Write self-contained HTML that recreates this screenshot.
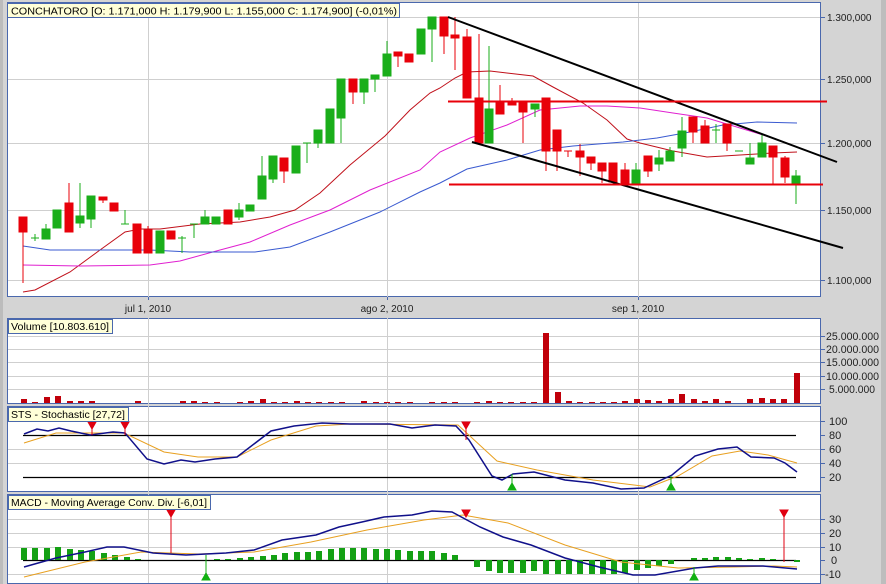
<!DOCTYPE html>
<html><head><meta charset="utf-8"><style>
html,body{margin:0;padding:0;background:#d4d4d4;width:886px;height:584px;overflow:hidden}
svg{display:block;font-family:"Liberation Sans",sans-serif}
</style></head><body>
<svg width="886" height="584" viewBox="0 0 886 584" xmlns="http://www.w3.org/2000/svg">
<rect x="0" y="0" width="886" height="584" fill="#d4d4d4"/>
<rect x="881" y="0" width="5" height="584" fill="#bdbdbd"/>
<rect x="0" y="0" width="3" height="584" fill="#bcbcbc"/>
<g fill="#fff" stroke="#4a68ad" stroke-width="1">
<rect x="7.5" y="2.5" width="813" height="294"/>
<rect x="7.5" y="318.5" width="813" height="85"/>
<rect x="7.5" y="406.5" width="813" height="85"/>
<rect x="7.5" y="494.5" width="813" height="89"/>
</g>
<g stroke="#cfcfcf" stroke-width="1">
<line x1="8" y1="17.5" x2="820" y2="17.5"/><line x1="8" y1="79.5" x2="820" y2="79.5"/><line x1="8" y1="143.5" x2="820" y2="143.5"/><line x1="8" y1="210.5" x2="820" y2="210.5"/><line x1="8" y1="280.5" x2="820" y2="280.5"/>
<line x1="148.5" y1="3" x2="148.5" y2="583"/><line x1="387.5" y1="3" x2="387.5" y2="583"/><line x1="638.5" y1="3" x2="638.5" y2="583"/>
<line x1="8" y1="336.5" x2="820" y2="336.5"/><line x1="8" y1="349.5" x2="820" y2="349.5"/><line x1="8" y1="362.5" x2="820" y2="362.5"/><line x1="8" y1="376.5" x2="820" y2="376.5"/><line x1="8" y1="389.5" x2="820" y2="389.5"/>
<line x1="8" y1="421.5" x2="820" y2="421.5"/><line x1="8" y1="449.5" x2="820" y2="449.5"/><line x1="8" y1="463.5" x2="820" y2="463.5"/>
<line x1="8" y1="519.5" x2="820" y2="519.5"/><line x1="8" y1="533.5" x2="820" y2="533.5"/><line x1="8" y1="547.5" x2="820" y2="547.5"/><line x1="8" y1="574.5" x2="820" y2="574.5"/>
</g>
<rect x="8" y="297" width="812" height="21" fill="#d4d4d4"/>
<rect x="8" y="404" width="812" height="2" fill="#d4d4d4"/>
<rect x="8" y="492" width="812" height="2" fill="#d4d4d4"/>
<g stroke="#4a68ad"><line x1="821" y1="17.5" x2="825" y2="17.5"/><line x1="821" y1="79.5" x2="825" y2="79.5"/><line x1="821" y1="143.5" x2="825" y2="143.5"/><line x1="821" y1="210.5" x2="825" y2="210.5"/><line x1="821" y1="280.5" x2="825" y2="280.5"/>
<line x1="821" y1="336.5" x2="825" y2="336.5"/><line x1="821" y1="349.5" x2="825" y2="349.5"/><line x1="821" y1="362.5" x2="825" y2="362.5"/><line x1="821" y1="376.5" x2="825" y2="376.5"/><line x1="821" y1="389.5" x2="825" y2="389.5"/>
<line x1="821" y1="421.5" x2="825" y2="421.5"/><line x1="821" y1="435.5" x2="825" y2="435.5"/><line x1="821" y1="449.5" x2="825" y2="449.5"/><line x1="821" y1="463.5" x2="825" y2="463.5"/><line x1="821" y1="477.5" x2="825" y2="477.5"/>
<line x1="821" y1="519.5" x2="825" y2="519.5"/><line x1="821" y1="533.5" x2="825" y2="533.5"/><line x1="821" y1="547.5" x2="825" y2="547.5"/><line x1="821" y1="560.5" x2="825" y2="560.5"/><line x1="821" y1="574.5" x2="825" y2="574.5"/>
<line x1="148.5" y1="297" x2="148.5" y2="300"/><line x1="387.5" y1="297" x2="387.5" y2="300"/><line x1="638.5" y1="297" x2="638.5" y2="300"/></g>
<g font-size="10" fill="#222">
<text x="827" y="21">1.300,000</text><text x="827" y="83">1.250,000</text><text x="827" y="147">1.200,000</text><text x="827" y="214">1.150,000</text><text x="827" y="284">1.100,000</text>
<text x="148" y="312" text-anchor="middle">jul 1, 2010</text><text x="387" y="312" text-anchor="middle">ago 2, 2010</text><text x="638" y="312" text-anchor="middle">sep 1, 2010</text>
</g>
<g font-size="11" fill="#222">
<text x="826" y="340" textLength="53" lengthAdjust="spacingAndGlyphs">25.000.000</text><text x="826" y="353" textLength="53" lengthAdjust="spacingAndGlyphs">20.000.000</text><text x="826" y="366" textLength="53" lengthAdjust="spacingAndGlyphs">15.000.000</text><text x="826" y="380" textLength="53" lengthAdjust="spacingAndGlyphs">10.000.000</text><text x="829" y="393" textLength="46" lengthAdjust="spacingAndGlyphs">5.000.000</text>
<text x="829" y="425">100</text><text x="829" y="439">80</text><text x="829" y="453">60</text><text x="829" y="467">40</text><text x="829" y="481">20</text>
<text x="829" y="523">30</text><text x="829" y="537">20</text><text x="829" y="551">10</text><text x="831" y="564">0</text><text x="825" y="578">-10</text>
</g>
<g fill="none" stroke-width="1">
<polyline stroke="#c0101a" points="23,292 35,290 70,272 100,250 125,232 140,229 160,229 200,224 240,222 270,217 295,210 320,193 350,165 385,136 410,110 430,93 440,88 455,78 467,72 490,71 533,76 553,87 583,103 607,120 627,139 640,143 673,151 707,157 740,155 773,153 797,152"/>
<polyline stroke="#e020d0" points="23,265 80,266 150,265 180,261 220,250 250,242 290,225 330,210 370,190 420,170 440,152 470,138 507,125 540,110 580,106 607,106 640,108 673,113 707,118 740,128 773,138 797,147"/>
<polyline stroke="#3a5ad0" points="23,246 50,250 100,250 150,250 190,252 255,252 290,247 330,232 380,212 420,192 440,183 467,169 507,160 540,150 573,146 623,142 657,138 690,132 723,125 757,122 797,123"/>
</g>
<g stroke-width="1">
<g stroke="#e8000a" fill="#e8000a">
<line x1="23" y1="217" x2="23" y2="283"/><rect x="19" y="217" width="8" height="15"/>
<line x1="69" y1="183" x2="69" y2="232"/><rect x="65" y="203" width="8" height="29"/>
<line x1="103" y1="197" x2="103" y2="203"/><rect x="99" y="197" width="8" height="3"/>
<rect x="110" y="203" width="8" height="8"/>
<rect x="133" y="224" width="8" height="29"/>
<line x1="148" y1="226" x2="148" y2="253"/><rect x="144" y="230" width="8" height="23"/>
<rect x="167" y="231" width="8" height="8"/>
<rect x="224" y="210" width="8" height="14"/>
<line x1="284" y1="158" x2="284" y2="183"/><rect x="280" y="158" width="8" height="13"/>
<line x1="353" y1="79" x2="353" y2="104"/><rect x="349" y="79" width="8" height="13"/>
<line x1="398" y1="52" x2="398" y2="67"/><rect x="394" y="52" width="8" height="4"/>
<rect x="405" y="54" width="8" height="8"/>
<line x1="444" y1="17" x2="444" y2="54"/><rect x="440" y="17" width="8" height="19"/>
<line x1="455" y1="17" x2="455" y2="70"/><rect x="451" y="35" width="8" height="3"/>
<line x1="467" y1="29" x2="467" y2="98"/><rect x="463" y="37" width="8" height="61"/>
<line x1="479" y1="34" x2="479" y2="143"/><rect x="475" y="98" width="8" height="45"/>
<line x1="500" y1="85" x2="500" y2="114"/><rect x="496" y="102" width="8" height="12"/>
<line x1="512" y1="98" x2="512" y2="104"/><rect x="508" y="102" width="8" height="3"/>
<line x1="523" y1="102" x2="523" y2="143"/><rect x="519" y="102" width="8" height="10"/>
<line x1="546" y1="98" x2="546" y2="171"/><rect x="542" y="98" width="8" height="53"/>
<line x1="557" y1="130" x2="557" y2="171"/><rect x="553" y="130" width="8" height="21"/>
<line x1="568" y1="151" x2="568" y2="157"/><line x1="564" y1="151" x2="572" y2="151"/>
<line x1="580" y1="144" x2="580" y2="176"/><rect x="576" y="151" width="8" height="6"/>
<line x1="591" y1="157" x2="591" y2="170"/><rect x="587" y="157" width="8" height="6"/>
<line x1="602" y1="163" x2="602" y2="183"/><rect x="598" y="163" width="8" height="8"/>
<rect x="609" y="163" width="8" height="19"/>
<line x1="625" y1="163" x2="625" y2="184"/><rect x="621" y="170" width="8" height="14"/>
<line x1="648" y1="156" x2="648" y2="177"/><rect x="644" y="156" width="8" height="15"/>
<line x1="693" y1="117" x2="693" y2="143"/><rect x="689" y="117" width="8" height="15"/>
<line x1="705" y1="120" x2="705" y2="143"/><rect x="701" y="126" width="8" height="17"/>
<line x1="727" y1="124" x2="727" y2="151"/><rect x="723" y="124" width="8" height="19"/>
<line x1="773" y1="146" x2="773" y2="184"/><rect x="769" y="146" width="8" height="11"/>
<line x1="785" y1="156" x2="785" y2="183"/><rect x="781" y="158" width="8" height="19"/>
</g>
<g stroke="#1aae1a" fill="#1aae1a">
<line x1="35" y1="234" x2="35" y2="241"/><line x1="31" y1="238" x2="39" y2="238"/>
<line x1="46" y1="224" x2="46" y2="239"/><rect x="42" y="229" width="8" height="10"/>
<rect x="53" y="210" width="8" height="18"/>
<line x1="80" y1="183" x2="80" y2="228"/><rect x="76" y="216" width="8" height="7"/>
<line x1="91" y1="196" x2="91" y2="228"/><rect x="87" y="196" width="8" height="23"/>
<line x1="125" y1="210" x2="125" y2="224"/><line x1="121" y1="224" x2="129" y2="224"/>
<rect x="156" y="231" width="8" height="22"/>
<line x1="182" y1="236" x2="182" y2="253"/><line x1="178" y1="238" x2="186" y2="238"/>
<line x1="194" y1="224" x2="194" y2="238"/><line x1="190" y1="224" x2="198" y2="224"/>
<line x1="205" y1="210" x2="205" y2="224"/><rect x="201" y="217" width="8" height="7"/>
<rect x="212" y="217" width="8" height="7"/>
<line x1="239" y1="203" x2="239" y2="220"/><rect x="235" y="210" width="8" height="7"/>
<rect x="246" y="205" width="8" height="6"/>
<line x1="262" y1="156" x2="262" y2="199"/><rect x="258" y="176" width="8" height="23"/>
<line x1="273" y1="156" x2="273" y2="183"/><rect x="269" y="156" width="8" height="23"/>
<rect x="292" y="146" width="8" height="27"/>
<line x1="307" y1="143" x2="307" y2="163"/><line x1="303" y1="143" x2="311" y2="143"/>
<line x1="318" y1="130" x2="318" y2="148"/><rect x="314" y="130" width="8" height="13"/>
<rect x="326" y="109" width="8" height="34"/>
<line x1="341" y1="79" x2="341" y2="143"/><rect x="337" y="79" width="8" height="39"/>
<line x1="364" y1="79" x2="364" y2="104"/><rect x="360" y="79" width="8" height="13"/>
<line x1="375" y1="75" x2="375" y2="92"/><rect x="371" y="75" width="8" height="4"/>
<line x1="387" y1="41" x2="387" y2="76"/><rect x="383" y="54" width="8" height="22"/>
<rect x="417" y="29" width="8" height="25"/>
<line x1="432" y1="17" x2="432" y2="62"/><rect x="428" y="17" width="8" height="12"/>
<line x1="489" y1="46" x2="489" y2="143"/><rect x="485" y="109" width="8" height="34"/>
<line x1="535" y1="104" x2="535" y2="117"/><rect x="531" y="104" width="8" height="5"/>
<line x1="636" y1="163" x2="636" y2="184"/><rect x="632" y="170" width="8" height="14"/>
<line x1="659" y1="150" x2="659" y2="171"/><rect x="655" y="158" width="8" height="6"/>
<line x1="670" y1="147" x2="670" y2="161"/><rect x="666" y="151" width="8" height="10"/>
<line x1="682" y1="117" x2="682" y2="157"/><rect x="678" y="131" width="8" height="17"/>
<line x1="716" y1="124" x2="716" y2="143"/><line x1="712" y1="130" x2="720" y2="130"/>
<line x1="735" y1="151" x2="743" y2="151"/>
<line x1="750" y1="143" x2="750" y2="164"/><rect x="746" y="158" width="8" height="6"/>
<line x1="762" y1="134" x2="762" y2="157"/><rect x="758" y="143" width="8" height="14"/>
<line x1="796" y1="170" x2="796" y2="204"/><rect x="792" y="176" width="8" height="7"/>
</g>
</g>
<g stroke-width="2" fill="none">
<line x1="448" y1="17" x2="837" y2="162" stroke="#000"/>
<line x1="472" y1="142" x2="843" y2="248" stroke="#000"/>
<line x1="448" y1="101.5" x2="827" y2="101.5" stroke="#e8000a"/>
<line x1="449" y1="184.5" x2="823" y2="184.5" stroke="#e8000a"/>
</g>
<g fill="#c0000a">
<rect x="21" y="399" width="6" height="4"/><rect x="32" y="402" width="6" height="1"/><rect x="44" y="397" width="6" height="6"/><rect x="55" y="396" width="6" height="7"/><rect x="67" y="401" width="6" height="2"/><rect x="78" y="401" width="6" height="2"/><rect x="89" y="401" width="6" height="2"/><rect x="135" y="401" width="6" height="2"/>
<rect x="180" y="401" width="6" height="2"/><rect x="191" y="401" width="6" height="2"/><rect x="202" y="402" width="6" height="1"/><rect x="214" y="402" width="6" height="1"/><rect x="237" y="402" width="6" height="1"/><rect x="248" y="401" width="6" height="2"/><rect x="260" y="399" width="6" height="4"/><rect x="271" y="402" width="6" height="1"/><rect x="282" y="402" width="6" height="1"/><rect x="294" y="401" width="6" height="2"/><rect x="305" y="402" width="6" height="1"/><rect x="316" y="402" width="6" height="1"/><rect x="328" y="402" width="6" height="1"/><rect x="339" y="402" width="6" height="1"/>
<rect x="361" y="401" width="6" height="2"/><rect x="373" y="402" width="6" height="1"/><rect x="384" y="402" width="6" height="1"/><rect x="395" y="402" width="6" height="1"/><rect x="407" y="402" width="6" height="1"/><rect x="429" y="402" width="6" height="1"/><rect x="441" y="402" width="6" height="1"/><rect x="452" y="402" width="6" height="1"/>
<rect x="474" y="402" width="6" height="1"/><rect x="486" y="401" width="6" height="2"/><rect x="497" y="402" width="6" height="1"/><rect x="508" y="402" width="6" height="1"/><rect x="520" y="402" width="6" height="1"/><rect x="531" y="402" width="6" height="1"/>
<rect x="543" y="333" width="6" height="70"/><rect x="555" y="392" width="6" height="11"/>
<rect x="566" y="401" width="6" height="2"/><rect x="577" y="402" width="6" height="1"/><rect x="589" y="402" width="6" height="1"/><rect x="600" y="402" width="6" height="1"/><rect x="611" y="402" width="6" height="1"/><rect x="622" y="401" width="6" height="2"/><rect x="634" y="399" width="6" height="4"/><rect x="645" y="400" width="6" height="3"/><rect x="656" y="401" width="6" height="2"/><rect x="668" y="399" width="6" height="4"/><rect x="679" y="394" width="6" height="9"/><rect x="691" y="399" width="6" height="4"/><rect x="702" y="401" width="6" height="2"/><rect x="713" y="399" width="6" height="4"/><rect x="725" y="401" width="6" height="2"/>
<rect x="747" y="399" width="6" height="4"/><rect x="759" y="398" width="6" height="5"/><rect x="770" y="399" width="6" height="4"/><rect x="781" y="399" width="6" height="4"/><rect x="794" y="373" width="6" height="30"/>
</g>
<g stroke="#000" stroke-width="1.2"><line x1="23" y1="435.5" x2="796" y2="435.5"/><line x1="23" y1="477.5" x2="796" y2="477.5"/></g>
<polyline fill="none" stroke="#e8a020" stroke-width="1" points="24,443 56,433 85,433 124,433 164,452 198,457 237,457 271,440 316,426 350,424 458,425 497,461 537,470 593,480 650,487 678,476 712,456 740,451 768,455 797,463"/>
<polyline fill="none" stroke="#10108a" stroke-width="1.5" points="24,434 37,429 48,431 59,428 71,431 90,435 113,432 125,433 147,459 164,464 181,460 195,462 215,459 237,457 271,431 294,426 322,423 350,424 390,424 412,428 435,425 456,426 469,440 492,476 502,480 513,474 534,472 565,480 593,483 621,489 644,488 672,475 695,456 718,449 737,447 751,457 774,458 785,463 797,472"/>
<g stroke="#e00010" fill="#e00010"><line x1="92" y1="424" x2="92" y2="435"/><path d="M88 422h8l-4 7z"/><line x1="125" y1="424" x2="125" y2="435"/><path d="M121 422h8l-4 7z"/><line x1="466" y1="424" x2="466" y2="440"/><path d="M462 422h8l-4 7z"/></g>
<g stroke="#10b010" fill="#10b010"><line x1="512" y1="474" x2="512" y2="488"/><path d="M508 490h8l-4-7z"/><line x1="671" y1="476" x2="671" y2="488"/><path d="M667 490h8l-4-7z"/></g>
<line x1="23" y1="560.5" x2="796" y2="560.5" stroke="#000" stroke-width="1.2"/>
<g fill="#14a014">
<rect x="21" y="548" width="6" height="12"/><rect x="32" y="548" width="6" height="12"/><rect x="44" y="548" width="6" height="12"/><rect x="55" y="547" width="6" height="13"/><rect x="67" y="549" width="6" height="11"/><rect x="78" y="550" width="6" height="10"/><rect x="89" y="551" width="6" height="9"/><rect x="101" y="553" width="6" height="7"/><rect x="112" y="555" width="6" height="5"/><rect x="124" y="557" width="6" height="3"/><rect x="135" y="559" width="6" height="1"/>
<rect x="214" y="559" width="6" height="1"/><rect x="225" y="559" width="6" height="1"/><rect x="237" y="558" width="6" height="2"/><rect x="248" y="557" width="6" height="3"/><rect x="260" y="556" width="6" height="4"/><rect x="271" y="555" width="6" height="5"/><rect x="282" y="553" width="6" height="7"/><rect x="294" y="552" width="6" height="8"/><rect x="305" y="552" width="6" height="8"/><rect x="316" y="551" width="6" height="9"/><rect x="328" y="549" width="6" height="11"/><rect x="339" y="548" width="6" height="12"/><rect x="350" y="548" width="6" height="12"/><rect x="361" y="548" width="6" height="12"/><rect x="373" y="549" width="6" height="11"/><rect x="384" y="549" width="6" height="11"/><rect x="395" y="550" width="6" height="10"/><rect x="407" y="551" width="6" height="9"/><rect x="418" y="551" width="6" height="9"/><rect x="429" y="551" width="6" height="9"/><rect x="441" y="553" width="6" height="7"/><rect x="452" y="555" width="6" height="5"/>
<rect x="474" y="560" width="6" height="7"/><rect x="486" y="560" width="6" height="11"/><rect x="497" y="560" width="6" height="13"/><rect x="508" y="560" width="6" height="13"/><rect x="520" y="560" width="6" height="13"/><rect x="531" y="560" width="6" height="11"/><rect x="543" y="560" width="6" height="14"/><rect x="555" y="560" width="6" height="14"/><rect x="566" y="560" width="6" height="14"/><rect x="577" y="560" width="6" height="14"/><rect x="589" y="560" width="6" height="14"/><rect x="600" y="560" width="6" height="14"/><rect x="611" y="560" width="6" height="14"/><rect x="622" y="560" width="6" height="13"/><rect x="634" y="560" width="6" height="10"/><rect x="645" y="560" width="6" height="8"/><rect x="656" y="560" width="6" height="6"/><rect x="668" y="560" width="6" height="4"/>
<rect x="691" y="558" width="6" height="2"/><rect x="702" y="558" width="6" height="2"/><rect x="713" y="557" width="6" height="3"/><rect x="725" y="557" width="6" height="3"/><rect x="736" y="558" width="6" height="2"/><rect x="747" y="559" width="6" height="1"/><rect x="759" y="558" width="6" height="2"/><rect x="770" y="559" width="6" height="1"/><rect x="794" y="560" width="6" height="2"/>
</g>
<polyline fill="none" stroke="#e8a020" stroke-width="1" points="24,577 85,562 141,552 198,554 254,552 311,542 367,530 424,520 463,515 508,523 565,545 621,562 678,568 734,567 774,566 797,567"/>
<polyline fill="none" stroke="#10108a" stroke-width="1.5" points="24,567 56,558 85,552 107,547 124,547 153,553 186,555 226,553 254,550 282,540 316,535 339,527 362,522 384,517 412,515 432,511 452,512 480,527 503,537 531,545 565,558 599,567 633,575 655,575 695,568 718,566 763,566 797,569"/>
<g stroke="#e00010" fill="#e00010"><line x1="171" y1="512" x2="171" y2="553"/><path d="M167 510h8l-4 7z"/><line x1="466" y1="512" x2="466" y2="516"/><path d="M462 510h8l-4 7z"/><line x1="784" y1="512" x2="784" y2="562"/><path d="M780 510h8l-4 7z"/></g>
<g stroke="#10b010" fill="#10b010"><line x1="206" y1="555" x2="206" y2="578"/><path d="M202 580h8l-4-7z"/><line x1="694" y1="567" x2="694" y2="578"/><path d="M690 580h8l-4-7z"/></g>
<g font-size="10.5" fill="#000">
<rect x="7.5" y="3.5" width="392" height="14" fill="#ffffd8" stroke="#4a68ad"/><text x="11" y="14.5" textLength="386" lengthAdjust="spacingAndGlyphs">CONCHATORO [O: 1.171,000  H: 1.179,900  L: 1.155,000  C: 1.174,900] (-0,01%)</text>
<rect x="8.5" y="319.5" width="104" height="14" fill="#ffffd8" stroke="#4a68ad"/><text x="11" y="330" textLength="98" lengthAdjust="spacingAndGlyphs">Volume [10.803.610]</text>
<rect x="8.5" y="407.5" width="120" height="14" fill="#ffffd8" stroke="#4a68ad"/><text x="11" y="418" textLength="114" lengthAdjust="spacingAndGlyphs">STS - Stochastic [27,72]</text>
<rect x="8.5" y="495.5" width="202" height="14" fill="#ffffd8" stroke="#4a68ad"/><text x="11" y="506" textLength="196" lengthAdjust="spacingAndGlyphs">MACD - Moving Average Conv. Div. [-6,01]</text>
</g>
</svg>
</body></html>
